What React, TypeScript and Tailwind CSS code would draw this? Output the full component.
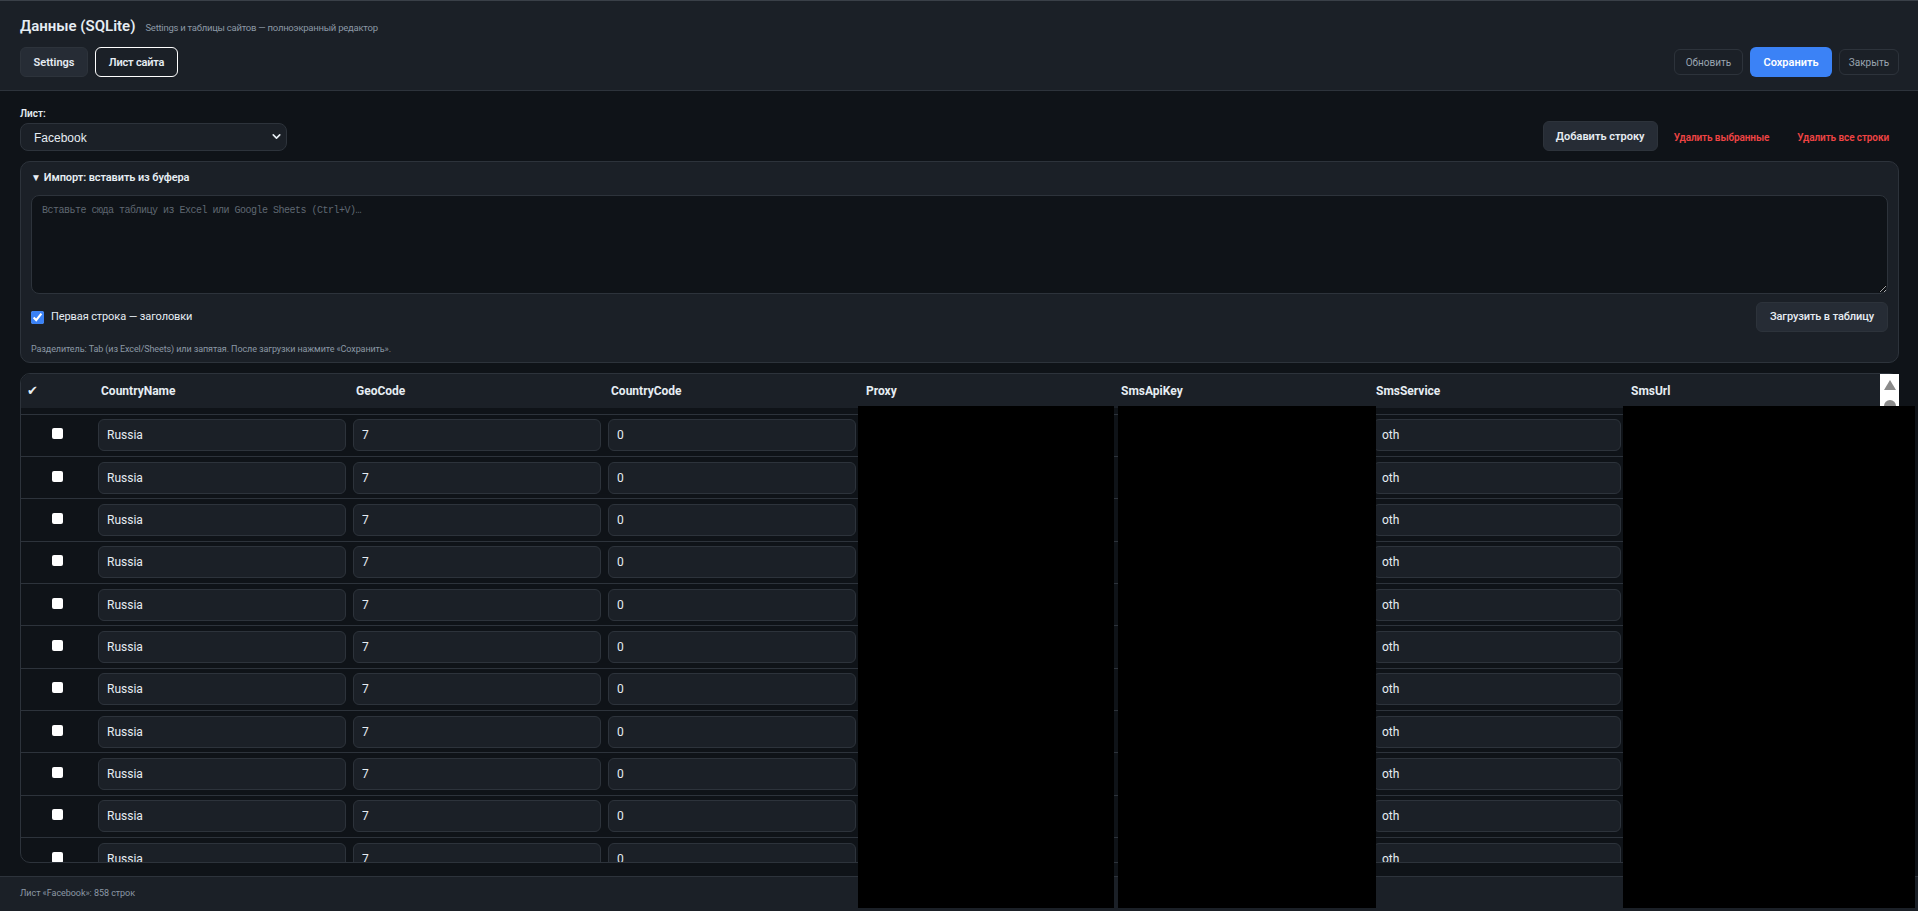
import { ChevronDown } from "lucide-react";

const columns = ["CountryName", "GeoCode", "CountryCode", "Proxy", "SmsApiKey", "SmsService", "SmsUrl"];
const values = ["Russia", "7", "0", "", "", "oth", ""];
const rows = Array.from({ length: 11 }, (_, i) => i);

function Row() {
  return (
    <div className="grid h-[42.33px] shrink-0 grid-cols-[73.5px_repeat(7,255px)] items-center border-t border-[#2d333b]">
      <div className="flex justify-center pb-[3px] pr-[1px]">
        <input type="checkbox" className="h-[11px] w-[11px] appearance-none rounded-[2px] bg-white" />
      </div>
      {values.map((value, i) => (
        <div key={i} className="px-[3.5px]">
          <input
            defaultValue={value}
            className="h-[32px] w-full rounded-[6px] border border-[#2d333b] bg-[#1b2027] px-[8px] text-[12px] text-[#e6edf3] outline-none"
          />
        </div>
      ))}
    </div>
  );
}

export default function App() {
  return (
    <div className="relative flex h-[911px] w-full flex-col overflow-hidden border-t border-[#3a4048] bg-[#0f1318] font-['Roboto',sans-serif] text-[#e6edf3]">
      <header className="flex h-[90px] shrink-0 items-end justify-between border-b border-[#2d333b] bg-[#1b2027] pb-[13px] pl-5 pr-[19px]">
        <div>
          <div className="mb-[11px] flex items-baseline gap-[10px]">
            <h1 className="text-[15px] font-semibold leading-[19px]">Данные (SQLite)</h1>
            <span className="text-[9.5px] tracking-[-0.25px] text-[#8b98a5]">Settings и таблицы сайтов — полноэкранный редактор</span>
          </div>
          <div className="flex gap-[7px]">
            <button className="h-[30px] w-[68px] rounded-[6px] border border-[#2d333b] bg-[#262c35] pt-[2px] text-[11px] font-semibold">Settings</button>
            <button className="h-[30px] w-[83px] rounded-[6px] border border-white bg-[#1b2027] pt-[2px] text-[11px] font-semibold tracking-[-0.2px]">Лист сайта</button>
          </div>
        </div>
        <div className="flex items-center gap-[7px]">
          <button className="h-[26px] w-[69px] rounded-[6px] border border-[#2d333b] pt-[1px] text-[10px] text-[#9aa5b1]">Обновить</button>
          <button className="h-[30px] w-[82px] rounded-[6px] bg-[#3b82f6] pt-[2px] text-[11px] font-semibold text-white">Сохранить</button>
          <button className="h-[26px] w-[60px] rounded-[6px] border border-[#2d333b] pt-[1px] text-[10px] text-[#9aa5b1]">Закрыть</button>
        </div>
      </header>

      <main className="flex min-h-0 flex-1 flex-col gap-[10px] pb-[13px] pl-5 pr-[19px] pt-[14px]">
        <div className="flex items-end justify-between">
          <div>
            <div className="mb-[2px] pt-[1px] text-[10px] font-semibold leading-[15px]">Лист:</div>
            <div className="relative w-[267px]">
              <select className="h-[28px] w-full appearance-none rounded-[8px] border border-[#2d333b] bg-[#1b2027] px-[13px] pt-[1px] font-['Liberation_Sans',sans-serif] text-[12px] text-[#e6edf3] outline-none">
                <option>Facebook</option>
              </select>
              <ChevronDown size={13} strokeWidth={3} className="absolute right-[4px] top-[7px] text-[#e6edf3]" />
            </div>
          </div>
          <div className="flex items-center pr-[10px]">
            <button className="h-[30px] w-[115px] rounded-[6px] border border-[#2d333b] bg-[#262c35] pt-[3px] text-[11px] font-semibold">Добавить строку</button>
            <button className="ml-[16px] pt-[2px] text-[10px] font-semibold tracking-[-0.1px] text-[#ef4444]">Удалить выбранные</button>
            <button className="ml-[28px] pt-[2px] text-[10px] font-semibold tracking-[-0.1px] text-[#ef4444]">Удалить все строки</button>
          </div>
        </div>

        <section className="shrink-0 rounded-[10px] border border-[#2d333b] bg-[#1b2027] px-[10px] pb-[6px] pt-[9px]">
          <div className="flex items-center gap-[3px] text-[11px] font-semibold leading-[14px] tracking-[-0.1px]">
            <span className="text-[10px]">▼</span>
            <span>Импорт: вставить из буфера</span>
          </div>
          <textarea
            placeholder="Вставьте сюда таблицу из Excel или Google Sheets (Ctrl+V)…"
            className="mt-[10px] block h-[99px] w-full rounded-[8px] border border-[#2d333b] bg-[#0f1318] px-[10px] py-[7px] font-['Liberation_Mono',monospace] text-[10px] tracking-[-0.5px] text-[#e6edf3] outline-none placeholder:text-[#5f6872]"
          />
          <div className="mt-[8px] flex h-[30px] items-center justify-between">
            <label className="flex items-center gap-[7px] text-[11px] tracking-[-0.1px]">
              <input type="checkbox" defaultChecked className="m-0 h-[13px] w-[13px] accent-[#3b82f6]" />
              <span className="pt-[1px]">Первая строка — заголовки</span>
            </label>
            <button className="h-[30px] w-[132px] rounded-[6px] border border-[#2d333b] bg-[#262c35] pt-[1px] text-[11px] font-medium tracking-[-0.1px]">Загрузить в таблицу</button>
          </div>
          <p className="mt-[10px] text-[9px] leading-[14px] tracking-[-0.1px] text-[#8b98a5]">
            Разделитель: Tab (из Excel/Sheets) или запятая. После загрузки нажмите «Сохранить».
          </p>
        </section>

        <div className="relative flex min-h-0 flex-1">
          <section className="flex min-h-0 w-full flex-col overflow-hidden rounded-[10px] border border-[#2d333b]">
            <div className="grid h-[34px] shrink-0 grid-cols-[73.5px_repeat(7,255px)] items-center bg-[#1b2027] text-[12px] font-bold">
              <div className="pl-[6px] font-['DejaVu_Sans',sans-serif] text-[13px]">✔</div>
              {columns.map((name) => (
                <div key={name} className="pl-[6.5px]">{name}</div>
              ))}
            </div>
            <div className="min-h-0 flex-1 overflow-hidden pt-[5.67px]">
              {rows.map((i) => (
                <Row key={i} />
              ))}
            </div>
          </section>
          <div className="absolute right-0 top-[1px] flex h-[60px] w-[19px] flex-col items-center gap-[10px] bg-white pt-[6px]">
            <div className="h-0 w-0 border-x-[6px] border-b-[10px] border-x-transparent border-b-[#8a8a8a]" />
            <div className="h-[12px] w-[12px] rounded-full bg-[#8a8a8a]" />
          </div>
        </div>
      </main>

      <footer className="flex h-[35px] shrink-0 items-center border-t border-[#2d333b] bg-[#1b2027] px-5 text-[9px] tracking-[-0.05px] text-[#8b98a5]">
        Лист «Facebook»: 858 строк
      </footer>

      {/* закрашенные колонки */}
      <div className="absolute left-[858px] top-[405px] h-[502px] w-[256px] bg-black" />
      <div className="absolute left-[1118px] top-[405px] h-[502px] w-[258px] bg-black" />
      <div className="absolute left-[1623px] top-[405px] h-[502px] w-[292px] bg-black" />
    </div>
  );
}
